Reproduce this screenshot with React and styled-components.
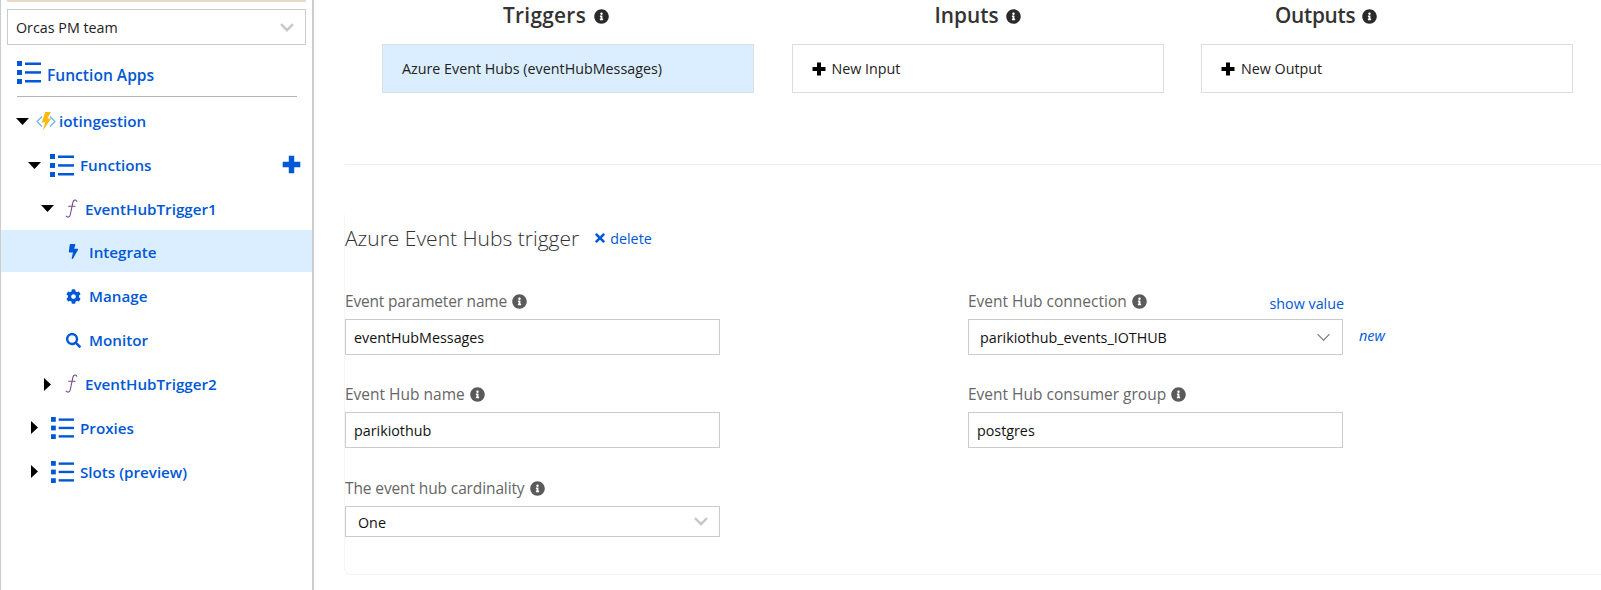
import React from 'react'
import styled, { createGlobalStyle } from 'styled-components'
import { FaBolt, FaCog, FaInfoCircle, FaSearch, FaTimes } from 'react-icons/fa'

const blue = '#0058d6'

const GlobalStyle = createGlobalStyle`
html, body { margin:0; padding:0; background:#fff; }
body { font-family:"Open Sans","Noto Sans",sans-serif; width:1601px; height:590px; overflow:hidden; }
`

function ListIcon({ width = 24, height = 23 }) {
    return (
        <svg width={width} height={height} viewBox="0 0 24 23" fill={blue}>
            <rect x="0" y="0" width="5" height="5" />
            <rect x="8" y="1.5" width="16" height="2.5" />
            <rect x="0" y="9" width="5" height="5" />
            <rect x="8" y="10.2" width="16" height="2.5" />
            <rect x="0" y="18" width="5" height="5" />
            <rect x="8" y="19" width="16" height="2.5" />
        </svg>
    )
}

function PlusIcon({ size = 14, color = '#000' }) {
    return (
        <svg width={size} height={size} viewBox="0 0 14 14" fill={color}>
            <path d="M5 0.5h4v4.5h4.5v4H9v4.5H5V9H0.5V5H5z" />
        </svg>
    )
}

function CaretDown() {
    return (
        <svg width="13" height="7" viewBox="0 0 13 7" fill="#000">
            <path d="M0 0h13L6.5 7z" />
        </svg>
    )
}

function CaretRight() {
    return (
        <svg width="7" height="13" viewBox="0 0 7 13" fill="#000">
            <path d="M0 0l7 6.5L0 13z" />
        </svg>
    )
}

function FuncIcon() {
    return (
        <svg width="13" height="20" viewBox="0 0 13 20" fill="none" stroke="#7a4a94" strokeWidth="1.1" strokeLinecap="round">
            <path d="M11.8 2.2C10.6.4 8.6.8 8 3L5.2 16c-.5 2.3-2.6 2.8-4 1.2" />
            <path d="M3.6 7.3h6.4" />
        </svg>
    )
}

function AppIcon() {
    return (
        <svg width="20" height="19" viewBox="0 0 20 19" fill="none">
            <path d="M6 4.5L1 9.5l5 5M14 4.5l5 5-5 5" stroke="#5fb4e6" strokeWidth="1.1" />
            <path d="M9.2 0h5.6L11.4 6.6h3.8L6.8 18.8l2.4-8.4H5.8z" fill="#fbb912" />
        </svg>
    )
}

function Chevron({ color = '#c8c8c8', weight = 2.4, width = 14 }) {
    return (
        <svg width={width} height="9" viewBox="0 0 14 9" fill="none" stroke={color} strokeWidth={weight}>
            <path d="M1 1.2l6 6 6-6" />
        </svg>
    )
}

function App() {
    return (
        <Page>
            <GlobalStyle />
            <Sidebar>
                <TopStrip />
                <TeamSelect>
                    <span>Orcas PM team</span>
                    <Chevron />
                </TeamSelect>
                <AppsHeader>
                    <ListIcon />
                    <span>Function Apps</span>
                </AppsHeader>
                <Tree>
                    <TreeRow $pad={16}>
                        <CaretSlot $w={20}><CaretDown /></CaretSlot>
                        <IconSlot $w={23}><AppIcon /></IconSlot>
                        iotingestion
                    </TreeRow>
                    <TreeRow $pad={28}>
                        <CaretSlot $w={22}><CaretDown /></CaretSlot>
                        <IconSlot $w={30}><ListIcon /></IconSlot>
                        Functions
                        <AddFunction><PlusIcon size={19} color={blue} /></AddFunction>
                    </TreeRow>
                    <TreeRow $pad={41}>
                        <CaretSlot $w={24}><CaretDown /></CaretSlot>
                        <IconSlot $w={20}><FuncIcon /></IconSlot>
                        EventHubTrigger1
                    </TreeRow>
                    <TreeRow $pad={66} $active>
                        <IconSlot $w={23}><FaBolt size={15} /></IconSlot>
                        Integrate
                    </TreeRow>
                    <TreeRow $pad={66}>
                        <IconSlot $w={23}><FaCog size={15} /></IconSlot>
                        Manage
                    </TreeRow>
                    <TreeRow $pad={66}>
                        <IconSlot $w={23}><FaSearch size={15} /></IconSlot>
                        Monitor
                    </TreeRow>
                    <TreeRow $pad={44}>
                        <CaretSlot $w={21}><CaretRight /></CaretSlot>
                        <IconSlot $w={20}><FuncIcon /></IconSlot>
                        EventHubTrigger2
                    </TreeRow>
                    <TreeRow $pad={31}>
                        <CaretSlot $w={20}><CaretRight /></CaretSlot>
                        <IconSlot $w={29}><ListIcon width={23} height={22} /></IconSlot>
                        Proxies
                    </TreeRow>
                    <TreeRow $pad={31}>
                        <CaretSlot $w={20}><CaretRight /></CaretSlot>
                        <IconSlot $w={29}><ListIcon width={23} height={22} /></IconSlot>
                        Slots (preview)
                    </TreeRow>
                </Tree>
            </Sidebar>
            <Main>
                <Binders>
                    <Binder>
                        <BinderTitle $indent={121} $track={0.3}>Triggers <FaInfoCircle size={15} /></BinderTitle>
                        <BinderBox $selected>Azure Event Hubs (eventHubMessages)</BinderBox>
                    </Binder>
                    <Binder>
                        <BinderTitle $indent={143}>Inputs <FaInfoCircle size={15} /></BinderTitle>
                        <BinderBox><PlusIcon />New Input</BinderBox>
                    </Binder>
                    <Binder>
                        <BinderTitle $indent={74} $track={-0.3}>Outputs <FaInfoCircle size={15} /></BinderTitle>
                        <BinderBox><PlusIcon />New Output</BinderBox>
                    </Binder>
                </Binders>
                <Rule />
                <Editor>
                    <EditorHead>
                        <EditorTitle>Azure Event Hubs trigger</EditorTitle>
                        <DeleteLink><FaTimes size={14} />delete</DeleteLink>
                    </EditorHead>
                    <Fields>
                        <Field>
                            <FieldLabel $track={-0.2}>Event parameter name <FaInfoCircle size={15} /></FieldLabel>
                            <TextBox>eventHubMessages</TextBox>
                        </Field>
                        <Field>
                            <FieldLabel>
                                Event Hub connection <FaInfoCircle size={15} />
                                <ShowValue>show value</ShowValue>
                            </FieldLabel>
                            <TextBox $select>
                                parikiothub_events_IOTHUB
                                <Chevron color="#777" weight={1.1} width={15} />
                                <NewLink>new</NewLink>
                            </TextBox>
                        </Field>
                        <Field>
                            <FieldLabel>Event Hub name <FaInfoCircle size={15} /></FieldLabel>
                            <TextBox>parikiothub</TextBox>
                        </Field>
                        <Field>
                            <FieldLabel>Event Hub consumer group <FaInfoCircle size={15} /></FieldLabel>
                            <TextBox>postgres</TextBox>
                        </Field>
                        <Field $low>
                            <FieldLabel $track={-0.12}>The event hub cardinality <FaInfoCircle size={15} /></FieldLabel>
                            <TextBox $select $short>
                                <span>One</span>
                                <Chevron />
                            </TextBox>
                        </Field>
                    </Fields>
                </Editor>
            </Main>
        </Page>
    )
}

export default App

const Page = styled.div`
display:flex;
width:1601px;
height:590px;
`
const Sidebar = styled.div`
width:314px;
height:590px;
flex-shrink:0;
box-sizing:border-box;
border-left:1px solid #ccc;
border-right:2px solid #ccc;
`
const TopStrip = styled.div`
height:2px;
margin:0 6px;
background:#e8d9c8;
`
const TeamSelect = styled.div`
height:36px;
margin:7px 6px 0;
padding:0 11px 0 8px;
box-sizing:border-box;
border:1px solid #ccc;
display:flex;
align-items:center;
justify-content:space-between;
font-size:14.3px;
color:#222;
`
const AppsHeader = styled.div`
height:52px;
margin:0 15px 0 16px;
padding-top:9px;
box-sizing:border-box;
border-bottom:1px solid #b4b4b4;
display:flex;
align-items:center;
gap:6px;
color:${blue};
font-size:15.6px;
font-weight:600;
svg { margin-top:-6px; }
`
const Tree = styled.div`
margin-top:2.4px;
`
const TreeRow = styled.div`
box-sizing:border-box;
height:${(p) => (p.$active ? 42 : 43.8)}px;
margin:${(p) => (p.$active ? '-1px 0 2.8px' : '0')};
padding-top:${(p) => (p.$active ? 2 : 0)}px;
padding-left:${(p) => p.$pad - 1}px;
display:flex;
align-items:center;
position:relative;
color:${blue};
font-size:15.2px;
font-weight:600;
background:${(p) => (p.$active ? '#dbeeff' : 'transparent')};
`
const CaretSlot = styled.span`
width:${(p) => p.$w}px;
display:flex;
align-items:center;
`
const IconSlot = styled.span`
width:${(p) => p.$w}px;
display:flex;
align-items:center;
`
const AddFunction = styled.span`
position:absolute;
right:11px;
top:12px;
display:flex;
`
const Main = styled.div`
flex:1;
min-width:0;
padding-left:31px;
`
const Binders = styled.div`
display:grid;
grid-template-columns:repeat(3,372px);
column-gap:37.5px;
margin-left:37px;
`
const Binder = styled.div``
const BinderTitle = styled.div`
height:44px;
padding-left:${(p) => p.$indent}px;
box-sizing:border-box;
padding-top:1px;
line-height:28px;
font-size:20.8px;
font-weight:600;
letter-spacing:${(p) => p.$track || 0}px;
color:#333;
white-space:nowrap;
svg { vertical-align:-1px; margin-left:2px; color:#2a2a2a; }
`
const BinderBox = styled.div`
height:49px;
box-sizing:border-box;
padding-left:19px;
display:flex;
align-items:center;
gap:6px;
border:1px solid ${(p) => (p.$selected ? '#d5dfe8' : '#ddd')};
background:${(p) => (p.$selected ? '#dbeeff' : '#fff')};
font-size:14.3px;
color:#222;
`
const Rule = styled.div`
height:1px;
margin-top:71px;
background:#ececec;
`
const Editor = styled.div`
height:360px;
margin:50px 0 0 -1px;
padding-top:7px;
box-sizing:border-box;
border-left:1px solid #f5f5f5;
border-bottom:1px solid #f3f3f3;
border-bottom-left-radius:6px;
`
const EditorHead = styled.div`
display:flex;
align-items:center;
gap:14px;
height:32px;
`
const EditorTitle = styled.div`
font-size:21px;
font-weight:300;
color:#333;
`
const DeleteLink = styled.div`
display:flex;
align-items:center;
gap:3px;
color:${blue};
font-size:14.3px;
`
const Fields = styled.div`
display:grid;
grid-template-columns:375px 375px;
column-gap:248px;
margin-top:37px;
`
const Field = styled.div`
height:93px;
margin-top:${(p) => (p.$low ? 1 : 0)}px;
`
const FieldLabel = styled.div`
height:20px;
margin-bottom:8px;
display:flex;
align-items:center;
gap:5px;
position:relative;
font-size:15.5px;
letter-spacing:${(p) => p.$track || 0}px;
color:#666;
svg { color:#5a5a5a; }
`
const ShowValue = styled.span`
position:absolute;
right:-1px;
top:3px;
letter-spacing:0;
color:${blue};
font-size:14.3px;
`
const TextBox = styled.div`
height:${(p) => (p.$short ? 31 : 36)}px;
box-sizing:border-box;
padding:0 ${(p) => (p.$select ? 11 : 7)}px 0 ${(p) => (p.$short ? 12 : p.$select ? 11 : 8)}px;
border:1px solid #ccc;
display:flex;
align-items:center;
justify-content:space-between;
position:relative;
font-size:14.3px;
color:#111;
> span:first-child { padding-top:${(p) => (p.$short ? 2 : 0)}px; }
`
const NewLink = styled.span`
position:absolute;
left:100%;
margin:-4px 0 0 17px;
color:${blue};
font-style:italic;
font-size:14.5px;
`
